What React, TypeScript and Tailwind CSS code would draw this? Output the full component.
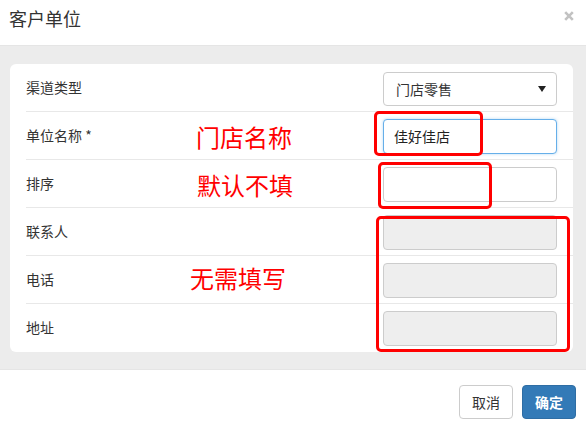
import React from "react";

const rows = [
  { label: "渠道类型", kind: "select" },
  { label: "单位名称 *", kind: "focus" },
  { label: "排序", kind: "empty" },
  { label: "联系人", kind: "disabled" },
  { label: "电话", kind: "disabled" },
  { label: "地址", kind: "disabled" },
];

function Field({ kind }: { kind: string }) {
  if (kind === "select") {
    return (
      <div className="mt-[8px] mr-[16px] flex h-[34px] w-[174px] items-center justify-between rounded-[4px] border border-[#cccccc] bg-white pl-[12px] pr-[10px] text-[14px] text-[#333333]">
        <span>门店零售</span>
        <svg width="8" height="6" viewBox="0 0 8 6">
          <path d="M0 0 L8 0 L4 6 Z" fill="#222" />
        </svg>
      </div>
    );
  }
  if (kind === "focus") {
    return (
      <div className="mt-[7px] mr-[16px] flex h-[35px] w-[174px] items-center rounded-[4px] border border-[#66afe9] bg-white pl-[10px] text-[14px] text-[#222222] shadow-[0_0_3px_rgba(102,175,233,0.5)]">
        佳好佳店
      </div>
    );
  }
  if (kind === "empty") {
    return <div className="mt-[7px] mr-[16px] h-[35px] w-[174px] rounded-[4px] border border-[#cccccc] bg-white" />;
  }
  return <div className="mt-[7px] mr-[16px] h-[35px] w-[174px] rounded-[4px] border border-[#cccccc] bg-[#eeeeee]" />;
}

export default function App() {
  return (
    <div className="relative flex h-[427px] w-[586px] flex-col overflow-hidden bg-white font-['Noto_Sans_CJK_SC',sans-serif] text-[#333333]">
      {/* header */}
      <div className="flex h-[46px] shrink-0 items-start justify-between border-b border-[#e5e5e5] pl-[9px] pr-[12px]">
        <div className="pt-[8px] text-[18px] leading-[20px] text-[#333333]">客户单位</div>
        <svg className="mt-[11px]" width="10" height="10" viewBox="0 0 10 10" aria-label="close">
          <path d="M1.2 1.2 L8.8 8.8 M8.8 1.2 L1.2 8.8" stroke="#c2c2c2" strokeWidth="2.6" strokeLinecap="butt" />
        </svg>
      </div>

      {/* body */}
      <div className="h-[323px] shrink-0 bg-[#ececec] pl-[10px] pr-[13px] pt-[18px]">
        <div className="flex flex-col rounded-[6px] bg-white">
          {rows.map((r, i) => (
            <div
              key={r.label}
              className={
                i < rows.length - 1
                  ? "ml-[16px] flex h-[48px] items-start justify-between border-b border-[#e8e8e8]"
                  : "ml-[16px] flex h-[48px] items-start justify-between"
              }
            >
              <div className="flex h-[47px] items-center text-[14px] text-[#333333]">{r.label}</div>
              <Field kind={r.kind} />
            </div>
          ))}
        </div>
      </div>

      {/* footer */}
      <div className="flex flex-1 items-start justify-end gap-[9px] border-t border-[#e5e5e5] pr-[10px] pt-[15px]">
        <button className="flex h-[34px] w-[54px] items-center justify-center rounded-[4px] border border-[#cccccc] bg-white text-[14px] text-[#333333]">
          取消
        </button>
        <button className="flex h-[34px] w-[54px] items-center justify-center rounded-[4px] border border-[#2e6da4] bg-[#337ab7] text-[14px] font-bold text-white">
          确定
        </button>
      </div>

      {/* annotations overlay */}
      <div className="absolute left-[196px] top-[124px] text-[24px] leading-[26px] text-[#ff0000]">门店名称</div>
      <div className="absolute left-[197px] top-[172px] text-[24px] leading-[26px] text-[#ff0000]">默认不填</div>
      <div className="absolute left-[190px] top-[265px] text-[24px] leading-[26px] text-[#ff0000]">无需填写</div>

      <div className="absolute left-[374px] top-[111px] h-[45px] w-[109px] rounded-[5px] border-[3px] border-[#ff0000]" />
      <div className="absolute left-[378px] top-[162px] h-[47px] w-[114px] rounded-[5px] border-[3px] border-[#ff0000]" />
      <div className="absolute left-[376px] top-[216px] h-[136px] w-[194px] rounded-[5px] border-[3px] border-[#ff0000]" />
    </div>
  );
}
